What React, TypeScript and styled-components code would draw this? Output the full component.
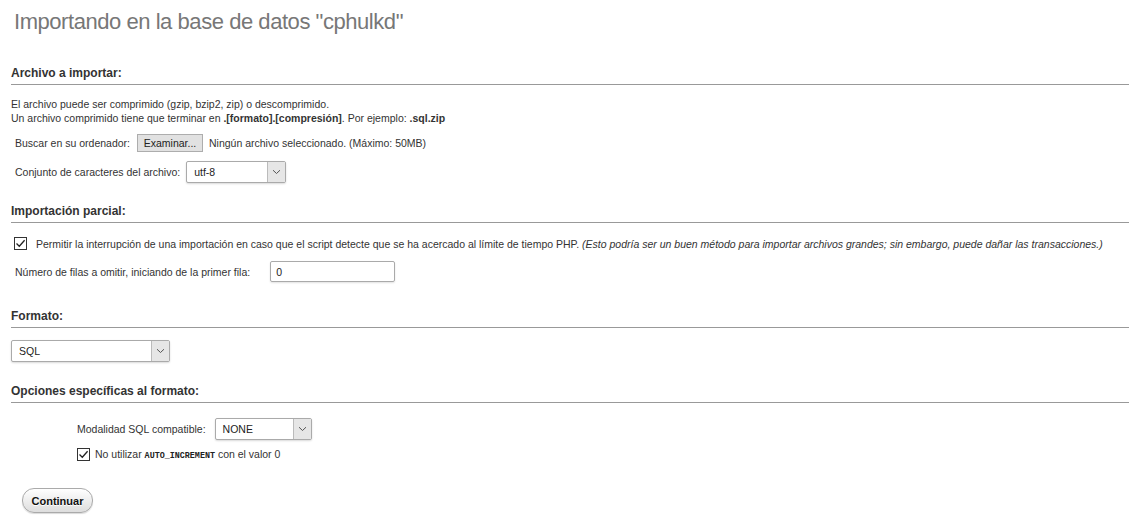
import React from "react";
import styled, { createGlobalStyle } from "styled-components";

const Global = createGlobalStyle`
  html, body { margin: 0; padding: 0; background: #fff; }
  body { font-family: "Liberation Sans", Arial, sans-serif; font-size: 10.5px; color: #333; }
`;

const Page = styled.div`
  width: 1129px;
  height: 525px;
  padding: 0 0 0 11px;
  box-sizing: border-box;
  overflow: hidden;
`;

const Title = styled.h2`
  margin: 8px 0 0 3px;
  font-size: 22px;
  line-height: 28px;
  letter-spacing: -0.45px;
  font-weight: normal;
  color: #777;
  text-shadow: 0 1px 0 #fff;
`;

const Section = styled.div<{ $top: number }>`
  margin-top: ${(p) => p.$top}px;
`;

const SectionHead = styled.h3`
  margin: 0;
  font-size: 12px;
  line-height: 14px;
  font-weight: bold;
  color: #333;
  padding-bottom: 4px;
  border-bottom: 1px solid #999;
`;

const Para = styled.p`
  margin: 12px 0 0 0;
  line-height: 14px;
`;

const Row = styled.div<{ $top: number; $indent?: number; $gap?: number }>`
  display: flex;
  align-items: center;
  margin-top: ${(p) => p.$top}px;
  padding-left: ${(p) => p.$indent ?? 4}px;
  gap: ${(p) => p.$gap ?? 6}px;
  white-space: nowrap;
`;

const FileButton = styled.button`
  font-family: inherit;
  font-size: 10.5px;
  color: #222;
  height: 18px;
  width: 66px;
  padding: 0;
  margin-left: 1px;
  background: #e1e1e1;
  border: 1px solid #adadad;
  border-radius: 0;
`;

const SelectBox = styled.div<{ $w: number; $shift?: number }>`
  display: flex;
  width: ${(p) => p.$w}px;
  height: 22px;
  margin-left: ${(p) => p.$shift ?? 0}px;
  box-sizing: border-box;
  border: 1px solid #aaa;
  border-radius: 2px;
  background: #fff;
  box-shadow: 0 1px 2px rgba(0, 0, 0, 0.15);
  color: #222;
`;

const SelectValue = styled.span`
  flex: 1;
  display: flex;
  align-items: center;
  padding-left: 7px;
`;

const SelectArrow = styled.span`
  width: 17px;
  display: flex;
  align-items: center;
  justify-content: center;
  background: #e6e6e6;
  border-left: 1px solid #bbb;
`;

const TextInput = styled.div`
  width: 125px;
  height: 21px;
  box-sizing: border-box;
  border: 1px solid #aaa;
  border-radius: 2px;
  box-shadow: 0 1px 2px rgba(0, 0, 0, 0.12);
  display: flex;
  align-items: center;
  padding-left: 5px;
  color: #222;
  margin-left: 14px;
`;

const Check = styled.span`
  width: 13px;
  height: 13px;
  box-sizing: border-box;
  border: 1px solid #333;
  background: #fff;
  display: inline-flex;
  align-items: center;
  justify-content: center;
  flex: none;
`;

const Em = styled.i`
  font-style: italic;
`;

const Mono = styled.code`
  font-family: "Liberation Mono", "Courier New", monospace;
  font-size: 8.4px;
  font-weight: bold;
  color: #222;
`;

const ContinueButton = styled.button`
  display: block;
  margin: 27px 0 0 11px;
  width: 71px;
  height: 25px;
  border: 1px solid #aaa;
  border-radius: 12px;
  background: linear-gradient(#fff, #ddd);
  box-shadow: 0 1px 1px rgba(0, 0, 0, 0.15);
  font-family: "Liberation Sans", Arial, sans-serif;
  font-size: 11px;
  font-weight: bold;
  color: #111;
  text-shadow: 0 1px 0 #fff;
  padding: 0;
`;

const Chevron = () => (
  <svg width="9" height="6" viewBox="0 0 9 6">
    <path d="M1 1.2 L4.5 4.5 L8 1.2" fill="none" stroke="#555" strokeWidth="1" />
  </svg>
);

const Tick = () => (
  <svg width="11" height="11" viewBox="0 0 11 11">
    <path d="M1.5 5.5 L4.3 8.3 L9.6 2.2" fill="none" stroke="#222" strokeWidth="1.3" />
  </svg>
);

const Select = ({ w, value, shift }: { w: number; value: string; shift?: number }) => (
  <SelectBox $w={w} $shift={shift}>
    <SelectValue>{value}</SelectValue>
    <SelectArrow>
      <Chevron />
    </SelectArrow>
  </SelectBox>
);

export default function App() {
  return (
    <>
      <Global />
      <Page>
        <Title>Importando en la base de datos "cphulkd"</Title>

        <Section $top={30}>
          <SectionHead>Archivo a importar:</SectionHead>
          <Para>
            El archivo puede ser comprimido (gzip, bzip2, zip) o descomprimido.
            <br />
            Un archivo comprimido tiene que terminar en <b>.[formato].[compresión]</b>. Por ejemplo: <b>.sql.zip</b>
          </Para>
          <Row $top={9}>
            <span>Buscar en su ordenador:</span>
            <FileButton>Examinar...</FileButton>
            <span>Ningún archivo seleccionado. (Máximo: 50MB)</span>
          </Row>
          <Row $top={9}>
            <span>Conjunto de caracteres del archivo:</span>
            <Select w={100} value="utf-8" />
          </Row>
        </Section>

        <Section $top={21}>
          <SectionHead>Importación parcial:</SectionHead>
          <Row $top={14} $indent={3} $gap={9}>
            <Check>
              <Tick />
            </Check>
            <span>
              Permitir la interrupción de una importación en caso que el script detecte que se ha acercado al límite de tiempo PHP.{" "}
              <Em>(Esto podría ser un buen método para importar archivos grandes; sin embargo, puede dañar las transacciones.)</Em>
            </span>
          </Row>
          <Row $top={11}>
            <span>Número de filas a omitir, iniciando de la primer fila:</span>
            <TextInput>0</TextInput>
          </Row>
        </Section>

        <Section $top={27}>
          <SectionHead>Formato:</SectionHead>
          <Row $top={12} $indent={0}>
            <Select w={159} value="SQL" />
          </Row>
        </Section>

        <Section $top={22}>
          <SectionHead>Opciones específicas al formato:</SectionHead>
          <Row $top={15} $indent={66}>
            <span>Modalidad SQL compatible:</span>
            <Select w={97} value="NONE" shift={3} />
          </Row>
          <Row $top={8} $indent={66} $gap={5}>
            <Check>
              <Tick />
            </Check>
            <span>
              No utilizar <Mono>AUTO_INCREMENT</Mono> con el valor 0
            </span>
          </Row>
        </Section>

        <ContinueButton>Continuar</ContinueButton>
      </Page>
    </>
  );
}
